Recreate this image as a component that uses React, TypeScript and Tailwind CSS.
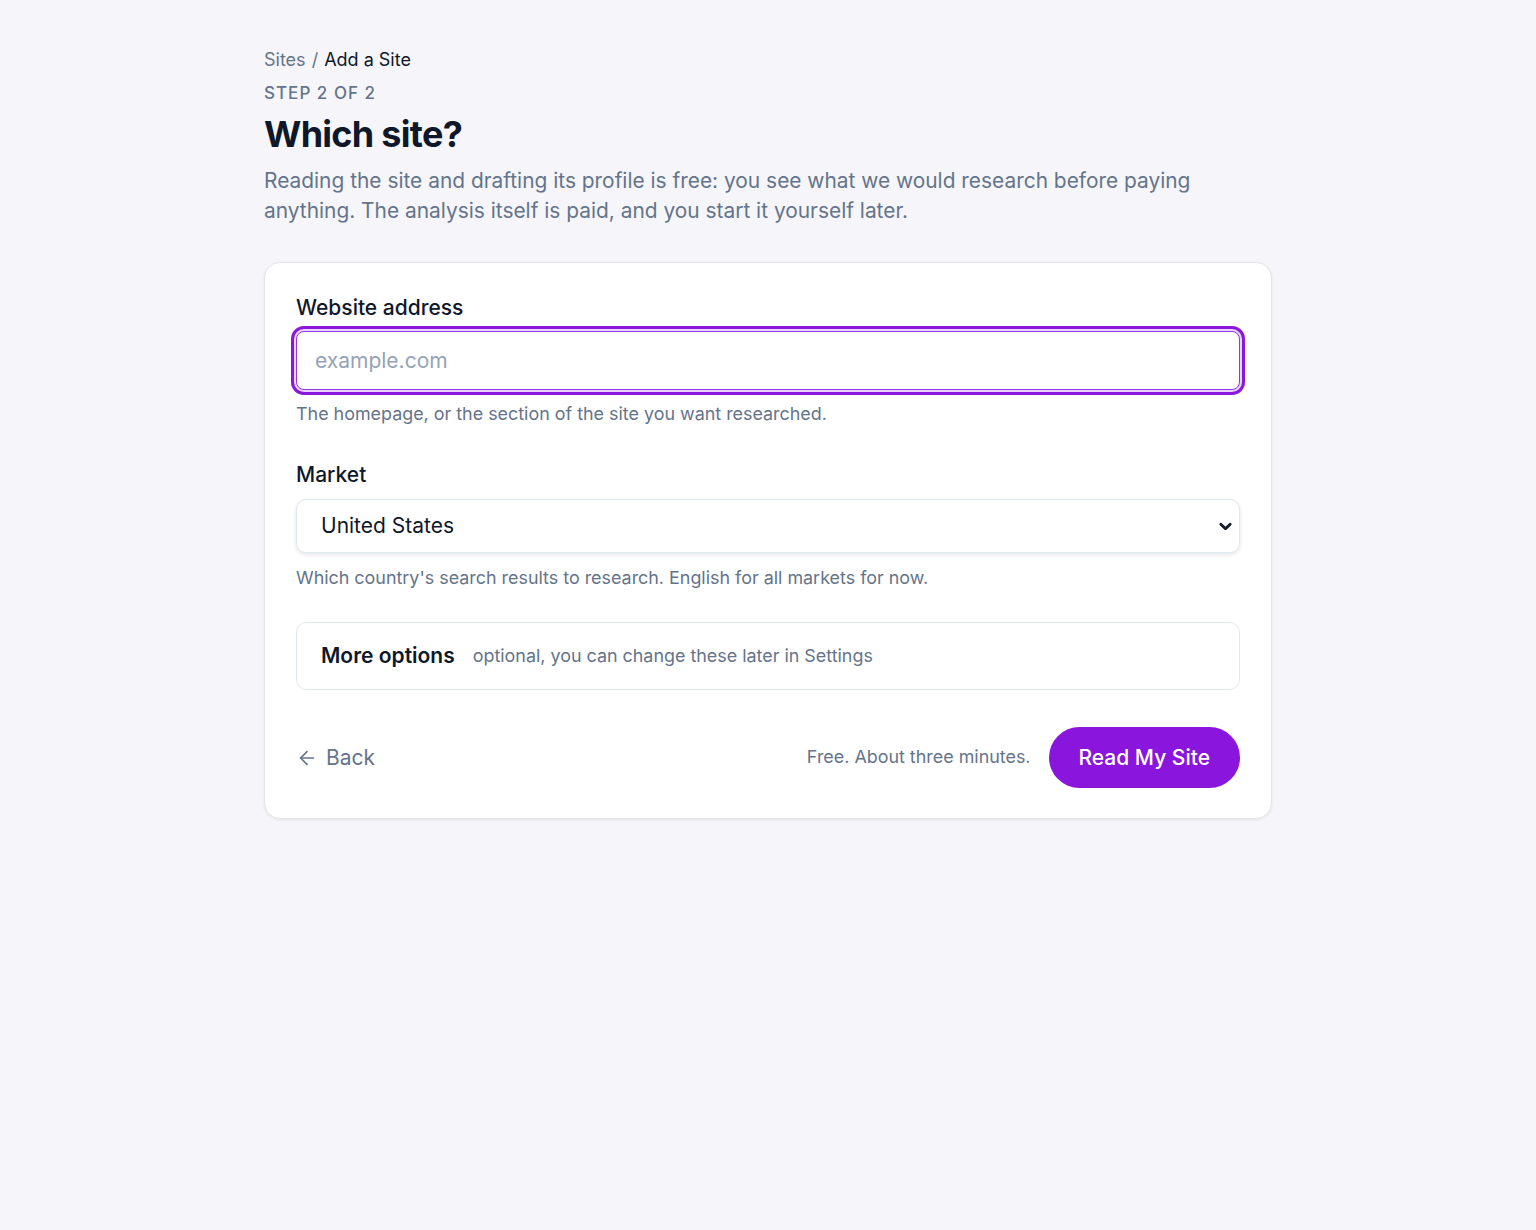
import { ArrowLeft } from 'lucide-react';

export default function App() {
  return (
    <div className="min-h-[1230px] bg-[#f6f6fa] font-['Inter',sans-serif] text-[#0f172a]">
      <div className="mx-auto w-[1008px] pt-[46px]">
        <div className="flex items-center gap-[6px] text-[18px] leading-[28px]">
          <span className="text-[#64748b]">Sites</span>
          <span className="text-[#64748b]">/</span>
          <span className="text-[#0f172a]">Add a Site</span>
        </div>
        <div className="mt-[7px] text-[17px] font-medium uppercase leading-[24px] tracking-[0.06em] text-[#64748b]">
          Step 2 of 2
        </div>
        <h1 className="mt-[7px] text-[36px] font-bold leading-[44px] tracking-[-0.02em]">Which site?</h1>
        <p className="mt-[10px] text-[20.9px] leading-[30px] text-[#64748b]">
          Reading the site and drafting its profile is free: you see what we would research before paying anything. The analysis itself is paid, and you start it yourself later.
        </p>

        <div className="mt-[36px] rounded-2xl border border-[#e3e5ea] bg-white px-[31px] pb-[30px] pt-[30px] shadow-[0_1px_3px_rgba(15,23,42,0.08)]">
          <label className="block text-[21px] font-medium leading-[30px]">Website address</label>
          <div className="mt-[8px] flex h-[59px] items-center rounded-[8px] border border-[#9333ea] bg-white px-[18px] shadow-[0_0_0_2px_#ead4fb,0_0_0_5px_#8b16dc]">
            <span className="text-[21px] text-[#94a3b8]">example.com</span>
          </div>
          <p className="mt-[11px] text-[17.9px] leading-[26px] text-[#64748b]">
            The homepage, or the section of the site you want researched.
          </p>

          <label className="mt-[33px] block text-[21px] font-medium leading-[30px]">Market</label>
          <div className="mt-[9px] flex h-[54px] items-center justify-between rounded-[10px] border border-[#e2e8f0] bg-white pl-[24px] pr-[6px] shadow-[0_2px_4px_rgba(15,23,42,0.1)]">
            <span className="text-[21px]">United States</span>
            <svg viewBox="0 0 16 16" className="h-[15px] w-[15px]" fill="none" stroke="#111827" strokeWidth={3} strokeLinecap="round" strokeLinejoin="round">
              <polyline points="3,5.5 8,10.5 13,5.5" />
            </svg>
          </div>
          <p className="mt-[12px] text-[17.9px] leading-[26px] text-[#64748b]">
            Which country's search results to research. English for all markets for now.
          </p>

          <div className="mt-[31px] flex h-[68px] items-center gap-[18px] rounded-[10px] border border-[#e2e8f0] px-[24px]">
            <span className="text-[21px] font-semibold">More options</span>
            <span className="text-[17.9px] text-[#64748b]">optional, you can change these later in Settings</span>
          </div>

          <div className="mt-[37px] flex items-center justify-between">
            <div className="flex items-center gap-[8px] text-[#64748b]">
              <ArrowLeft className="h-[22px] w-[22px]" strokeWidth={1.8} />
              <span className="text-[21px]">Back</span>
            </div>
            <div className="flex items-center gap-[18px]">
              <span className="text-[17.9px] text-[#64748b]">Free. About three minutes.</span>
              <button className="h-[61px] rounded-full bg-[#8a15dd] px-[30px] text-[21px] font-medium text-white">
                Read My Site
              </button>
            </div>
          </div>
        </div>
      </div>
    </div>
  );
}
